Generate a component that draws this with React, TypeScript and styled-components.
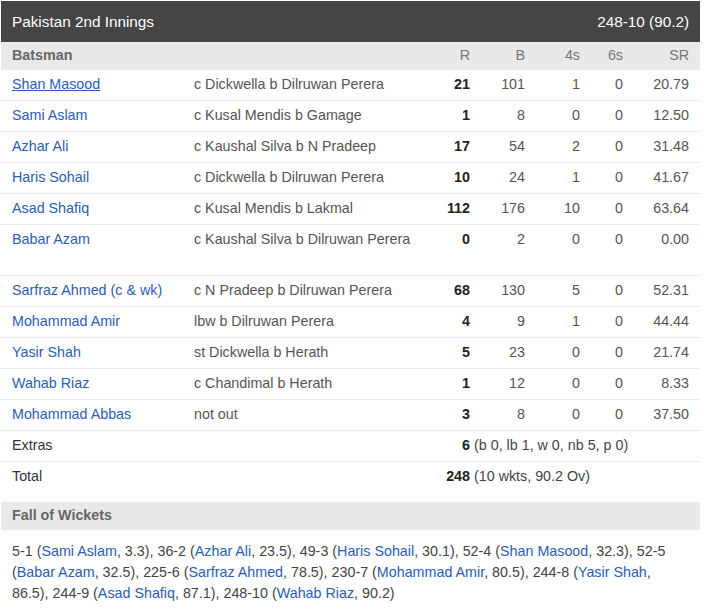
import styled, { createGlobalStyle } from 'styled-components';

interface Batter {
  name: string;
  dismissal: string;
  r: number;
  b: number;
  fours: number;
  sixes: number;
  sr: string;
  hovered?: boolean;
  tall?: boolean;
}

const BATTERS: Batter[] = [
  { name: 'Shan Masood', dismissal: 'c Dickwella b Dilruwan Perera', r: 21, b: 101, fours: 1, sixes: 0, sr: '20.79', hovered: true },
  { name: 'Sami Aslam', dismissal: 'c Kusal Mendis b Gamage', r: 1, b: 8, fours: 0, sixes: 0, sr: '12.50' },
  { name: 'Azhar Ali', dismissal: 'c Kaushal Silva b N Pradeep', r: 17, b: 54, fours: 2, sixes: 0, sr: '31.48' },
  { name: 'Haris Sohail', dismissal: 'c Dickwella b Dilruwan Perera', r: 10, b: 24, fours: 1, sixes: 0, sr: '41.67' },
  { name: 'Asad Shafiq', dismissal: 'c Kusal Mendis b Lakmal', r: 112, b: 176, fours: 10, sixes: 0, sr: '63.64' },
  { name: 'Babar Azam', dismissal: 'c Kaushal Silva b Dilruwan Perera', r: 0, b: 2, fours: 0, sixes: 0, sr: '0.00', tall: true },
  { name: 'Sarfraz Ahmed (c & wk)', dismissal: 'c N Pradeep b Dilruwan Perera', r: 68, b: 130, fours: 5, sixes: 0, sr: '52.31' },
  { name: 'Mohammad Amir', dismissal: 'lbw b Dilruwan Perera', r: 4, b: 9, fours: 1, sixes: 0, sr: '44.44' },
  { name: 'Yasir Shah', dismissal: 'st Dickwella b Herath', r: 5, b: 23, fours: 0, sixes: 0, sr: '21.74' },
  { name: 'Wahab Riaz', dismissal: 'c Chandimal b Herath', r: 1, b: 12, fours: 0, sixes: 0, sr: '8.33' },
  { name: 'Mohammad Abbas', dismissal: 'not out', r: 3, b: 8, fours: 0, sixes: 0, sr: '37.50' },
];

const WICKETS: [string, string, string][] = [
  ['5-1', 'Sami Aslam', '3.3'],
  ['36-2', 'Azhar Ali', '23.5'],
  ['49-3', 'Haris Sohail', '30.1'],
  ['52-4', 'Shan Masood', '32.3'],
  ['52-5', 'Babar Azam', '32.5'],
  ['225-6', 'Sarfraz Ahmed', '78.5'],
  ['230-7', 'Mohammad Amir', '80.5'],
  ['244-8', 'Yasir Shah', '86.5'],
  ['244-9', 'Asad Shafiq', '87.1'],
  ['248-10', 'Wahab Riaz', '90.2'],
];

const GlobalStyle = createGlobalStyle`
  body {
    margin: 0;
    background: #fff;
    font-family: 'Liberation Sans', Arial, sans-serif;
  }
`;

const Page = styled.div`
  width: 699px;
  padding: 1px 0 0 1px;
  font-size: 14.3px;
  color: #444;
`;

const TitleBar = styled.div`
  display: flex;
  justify-content: space-between;
  align-items: center;
  height: 41px;
  padding: 0 11px;
  background: #454545;
  color: #fff;
  font-size: 15.3px;
`;

const Row = styled.div<{ $tall?: boolean; $noBorder?: boolean }>`
  display: grid;
  grid-template-columns: 182px 1fr 50px 55px 55px 43px 66px;
  padding: 0 11px ${(p) => (p.$tall ? '21px' : '1px')};
  line-height: 29px;
  border-bottom: ${(p) => (p.$noBorder ? 'none' : '1px solid #e8e8e8')};
`;

const HeadRow = styled(Row)`
  line-height: 27px;
  background: #e9e9e9;
  border-bottom: none;
`;

const HeadLabel = styled.div`
  font-weight: bold;
  color: #666;
`;

const HeadNum = styled.div`
  text-align: right;
  color: #777;
`;

const Num = styled.div<{ $bold?: boolean }>`
  text-align: right;
  font-weight: ${(p) => (p.$bold ? 'bold' : 'normal')};
  color: ${(p) => (p.$bold ? '#222' : '#555')};
`;

const Name = styled.a<{ $hovered?: boolean }>`
  color: #2a5db5;
  text-decoration: ${(p) => (p.$hovered ? 'underline' : 'none')};
  cursor: pointer;
`;

const Dismissal = styled.div`
  color: #555;
  white-space: nowrap;
`;

const SummaryLabel = styled.div`
  grid-column: 1 / 3;
  color: #333;
`;

const SummaryDetail = styled.div`
  grid-column: 4 / -1;
  padding-left: 4px;
  color: #444;
  white-space: nowrap;
`;

const SectionHead = styled.div`
  margin-top: 10px;
  height: 28px;
  line-height: 27px;
  padding: 0 11px;
  background: #e9e9e9;
  color: #666;
  font-weight: bold;
`;

const Wickets = styled.p`
  margin: 0;
  padding: 11px 11px 0;
  line-height: 21px;
  color: #444;
`;

const App = () => {
  return (
    <Page>
      <GlobalStyle />
      <TitleBar>
        <span>Pakistan 2nd Innings</span>
        <span>248-10 (90.2)</span>
      </TitleBar>
      <HeadRow>
        <HeadLabel>Batsman</HeadLabel>
        <div />
        <HeadNum>R</HeadNum>
        <HeadNum>B</HeadNum>
        <HeadNum>4s</HeadNum>
        <HeadNum>6s</HeadNum>
        <HeadNum>SR</HeadNum>
      </HeadRow>
      {BATTERS.map((b) => (
        <Row key={b.name} $tall={b.tall}>
          <div>
            <Name $hovered={b.hovered}>{b.name}</Name>
          </div>
          <Dismissal>{b.dismissal}</Dismissal>
          <Num $bold>{b.r}</Num>
          <Num>{b.b}</Num>
          <Num>{b.fours}</Num>
          <Num>{b.sixes}</Num>
          <Num>{b.sr}</Num>
        </Row>
      ))}
      <Row>
        <SummaryLabel>Extras</SummaryLabel>
        <Num $bold>6</Num>
        <SummaryDetail>(b 0, lb 1, w 0, nb 5, p 0)</SummaryDetail>
      </Row>
      <Row $noBorder>
        <SummaryLabel>Total</SummaryLabel>
        <Num $bold>248</Num>
        <SummaryDetail>(10 wkts, 90.2 Ov)</SummaryDetail>
      </Row>
      <SectionHead>Fall of Wickets</SectionHead>
      <Wickets>
        {WICKETS.map(([score, name, over], i) => (
          <span key={score}>
            {score} (<Name>{name}</Name>, {over}){i < WICKETS.length - 1 ? ', ' : ''}
          </span>
        ))}
      </Wickets>
    </Page>
  );
};

export default App;
